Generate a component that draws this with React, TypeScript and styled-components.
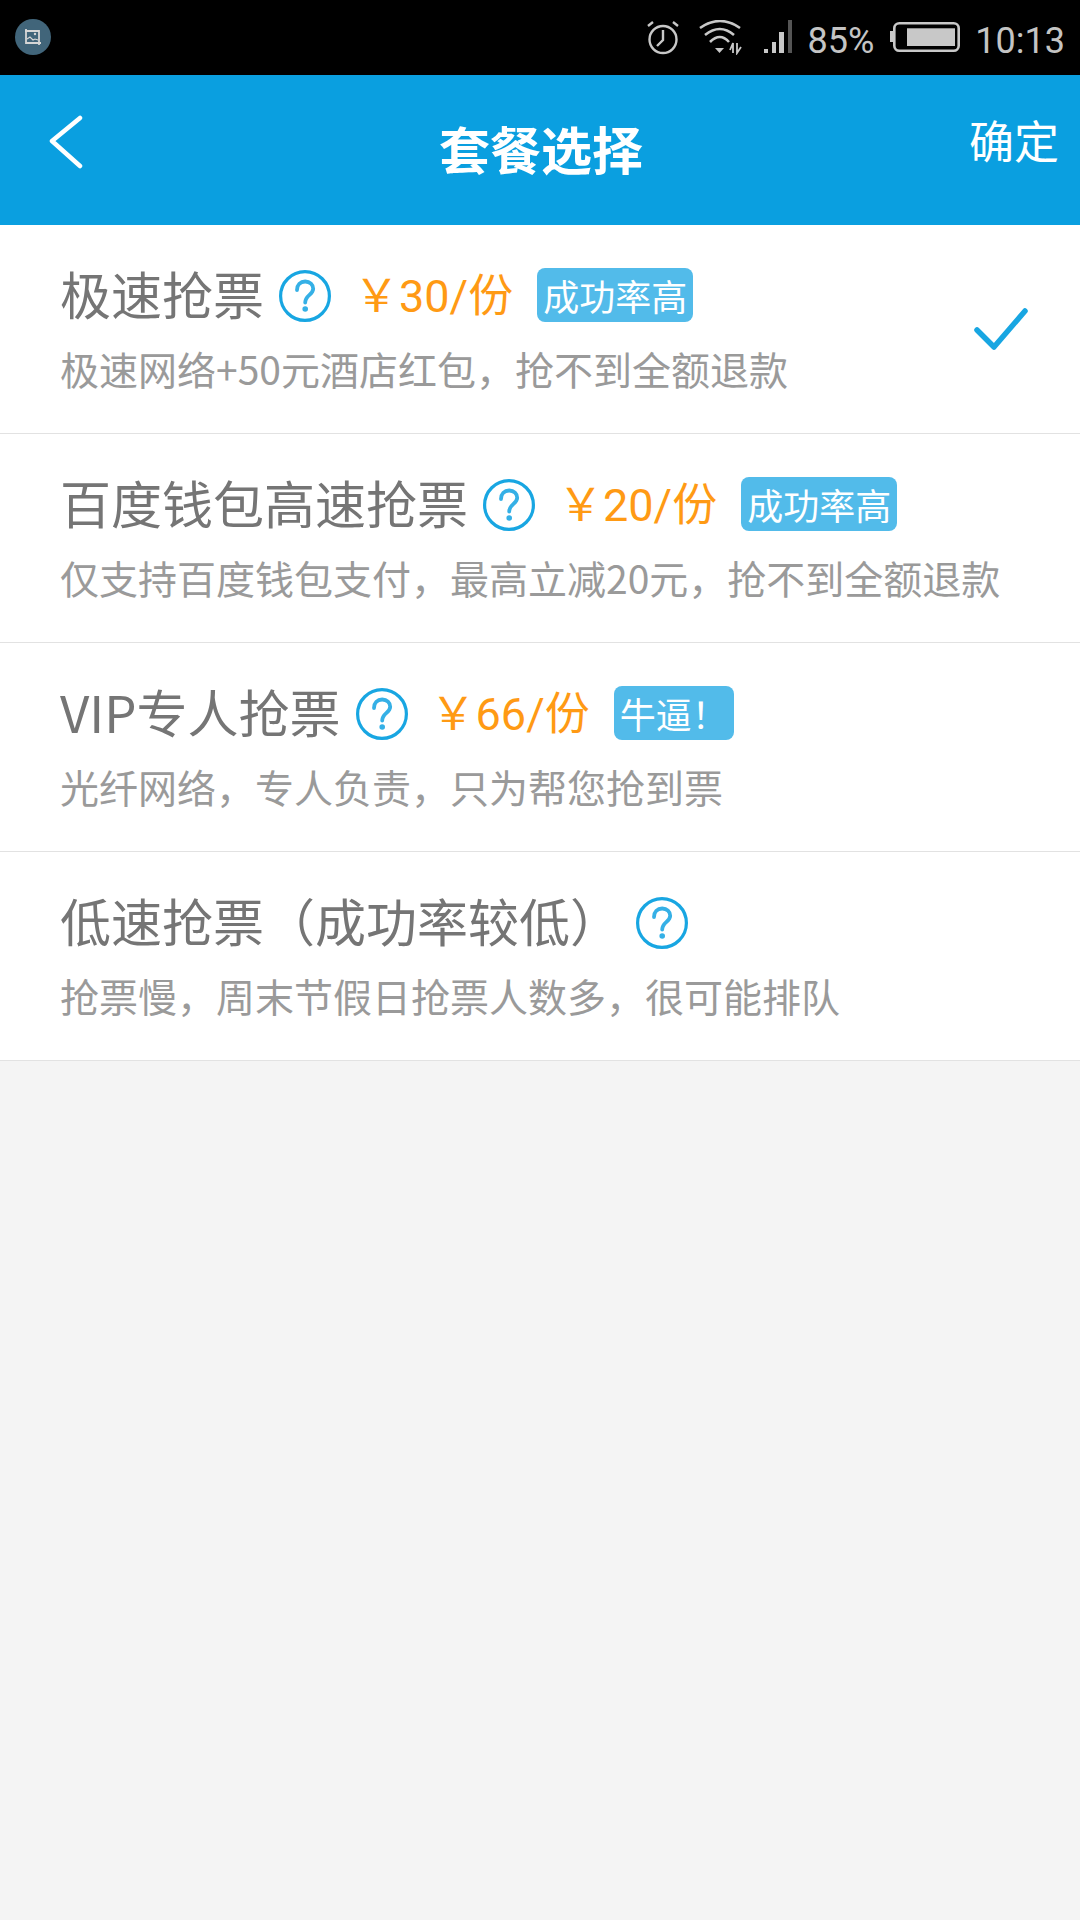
import React from "react";
import styled, { createGlobalStyle } from "styled-components";

const Global = createGlobalStyle`
  html, body { margin: 0; padding: 0; background: #f4f4f4; }
  body { font-family: "Noto Sans CJK SC", "Roboto", sans-serif; }
`;

const Page = styled.div`
  width: 1080px;
  height: 1920px;
  background: #f4f4f4;
  overflow: hidden;
`;

const StatusBar = styled.div`
  height: 75px;
  background: #000;
  display: flex;
  align-items: center;
  padding: 0 15px;
  box-sizing: border-box;
`;

const Notif = styled.div`
  width: 36px;
  height: 36px;
  border-radius: 50%;
  background: #41657a;
  display: flex;
  align-items: center;
  justify-content: center;
  margin-top: -1px;
`;

const StatusRight = styled.div`
  margin-left: auto;
  display: flex;
  align-items: flex-start;
  color: #c4c4c4;
  font-family: Roboto, sans-serif;
  font-size: 36px;
  height: 75px;
`;

const StatusText = styled.span<{ $ml: number }>`
  margin-left: ${(p) => p.$ml}px;
  line-height: 1;
  margin-top: 23px;
`;

const StatusIcon = styled.svg<{ $ml: number }>`
  margin-left: ${(p) => p.$ml}px;
  margin-top: 20px;
  display: block;
  flex: none;
`;

const Header = styled.div`
  height: 150px;
  background: #0a9fe0;
  display: flex;
  align-items: flex-start;
  color: #fff;
`;

const BackWrap = styled.div`
  width: 100px;
  padding: 40px 0 0 48px;
  box-sizing: border-box;
  flex: none;
`;

const Title = styled.div`
  position: absolute;
  left: 0;
  width: 1082px;
  text-align: center;
  font-size: 51px;
  font-weight: 700;
  line-height: 60px;
  margin-top: 43px;
`;

const Confirm = styled.div`
  font-size: 45px;
  line-height: 54px;
  margin: 38px 21px 0 auto;
`;

const List = styled.div`
  background: #fff;
`;

const Row = styled.div`
  height: 209px;
  box-sizing: border-box;
  border-bottom: 1px solid #e2e2e2;
  padding: 36px 0 0 60px;
  display: flex;
  position: relative;
`;

const RowBody = styled.div`
  display: flex;
  flex-direction: column;
`;

const TitleLine = styled.div`
  display: flex;
  align-items: flex-start;
  height: 64px;
`;

const Name = styled.span`
  font-size: 51px;
  line-height: 64px;
  color: #757575;
  white-space: nowrap;
`;

const Help = styled.svg`
  margin: 9px 0 0 15px;
  flex: none;
  display: block;
`;

const Price = styled.span`
  margin: 4px 0 0 23px;
  font-size: 45px;
  line-height: 64px;
  color: #ff9a14;
  white-space: nowrap;
  font-family: Roboto, "Noto Sans CJK SC", sans-serif;
`;

const Badge = styled.span<{ $w: number }>`
  margin: 7px 0 0 24px;
  width: ${(p) => p.$w}px;
  height: 54px;
  box-sizing: border-box;
  padding-left: 6px;
  border-radius: 8px;
  background: #52bbea;
  color: #fff;
  font-size: 36px;
  line-height: 54px;
  white-space: nowrap;
`;

const Sub = styled.div`
  margin-top: 15px;
  font-size: 39px;
  line-height: 56px;
  color: #9a9a9a;
  white-space: nowrap;
`;

const Check = styled.svg`
  position: absolute;
  left: 973px;
  top: 82px;
`;

const HelpIcon = () => (
  <Help width="52" height="52" viewBox="0 0 52 52">
    <circle cx="26" cy="26" r="24.4" fill="#fff" stroke="#18a6e2" strokeWidth="3.2" />
    <path d="M18 20c0-5 3.400-8.500 8.200-8.500s8 3.200 8 7.200c0 6-8 6.500-8 13.800" fill="none" stroke="#35b0e6" strokeWidth="3.8" strokeLinecap="round" />
    <circle cx="26.200" cy="39" r="2.800" fill="#35b0e6" />
  </Help>
);

const rows = [
  { name: "极速抢票", price: "￥30/份", badge: "成功率高", w: 156, sub: "极速网络+50元酒店红包，抢不到全额退款", checked: true },
  { name: "百度钱包高速抢票", price: "￥20/份", badge: "成功率高", w: 156, sub: "仅支持百度钱包支付，最高立减20元，抢不到全额退款" },
  { name: "VIP专人抢票", price: "￥66/份", badge: "牛逼！", w: 120, sub: "光纤网络，专人负责，只为帮您抢到票" },
  { name: "低速抢票（成功率较低）", sub: "抢票慢，周末节假日抢票人数多，很可能排队" },
];

export default function App() {
  return (
    <Page>
      <Global />
      <StatusBar>
        <Notif>
          <svg width="18" height="18" viewBox="0 0 18 18" fill="none" stroke="#d6d6d6" strokeWidth="1.8">
            <path d="M2 1v14h15M1 3h14v14" />
            <path d="M3 11l3-2 3 3 2-1 3 1" strokeWidth="1.1" />
            <circle cx="11" cy="6" r="1.200" fill="#d6d6d6" stroke="none" />
          </svg>
        </Notif>
        <StatusRight>
          <StatusIcon $ml={0} width="34" height="35" viewBox="0 0 34 35" fill="none" stroke="#c8c8c8" strokeWidth="2.4">
            <circle cx="17" cy="19.500" r="13.500" />
            <path d="M17 10v10l-6 6M2 6l5-4M32 6l-5-4" />
          </StatusIcon>
          <StatusIcon $ml={19} width="44" height="35" viewBox="0 0 44 35" fill="none" stroke="#c8c8c8" strokeWidth="2.6">
            <path d="M1 8Q21 -6 41 8M6 15Q21 3 35 15M11 22Q21 12 30 22" />
            <path d="M16 28h9l-4.500 5z" fill="#c8c8c8" stroke="none" />
            <path d="M34 33v-10l-3 7M38 23v10l4-6" strokeWidth="1.8" />
          </StatusIcon>
          <StatusIcon $ml={21} width="28" height="35" viewBox="0 0 28 35">
            <rect x="0" y="29" width="4" height="4" fill="#c8c8c8" />
            <rect x="8" y="22" width="4" height="11" fill="#c8c8c8" />
            <rect x="15" y="12" width="5" height="21" fill="#c8c8c8" />
            <rect x="24" y="0" width="4" height="33" fill="#555" />
          </StatusIcon>
          <StatusText $ml={16}>85%</StatusText>
          <StatusIcon $ml={16} width="70" height="35" viewBox="0 0 70 35">
            <rect x="0" y="11" width="4" height="11" fill="#c8c8c8" />
            <rect x="4.300" y="3.300" width="64.400" height="27.400" rx="5" fill="none" stroke="#c8c8c8" strokeWidth="2.6" />
            <rect x="17" y="8.300" width="48" height="17.700" fill="#c8c8c8" />
          </StatusIcon>
          <StatusText $ml={15}>10:13</StatusText>
        </StatusRight>
      </StatusBar>
      <Header>
        <BackWrap>
          <svg width="36" height="56" viewBox="0 0 36 56" fill="none" stroke="#fff" strokeWidth="4.500" strokeLinecap="round" strokeLinejoin="round">
            <path d="M32 3L4 26l28 25" />
          </svg>
        </BackWrap>
        <Title>套餐选择</Title>
        <Confirm>确定</Confirm>
      </Header>
      <List>
        {rows.map((r) => (
          <Row key={r.name}>
            <RowBody>
              <TitleLine>
                <Name>{r.name}</Name>
                <HelpIcon />
                {r.price && <Price>{r.price}</Price>}
                {r.badge && <Badge $w={r.w!}>{r.badge}</Badge>}
              </TitleLine>
              <Sub>{r.sub}</Sub>
            </RowBody>
            {r.checked && (
              <Check width="56" height="46" viewBox="0 0 56 46" fill="none" stroke="#18a6e2" strokeWidth="5.500" strokeLinecap="round" strokeLinejoin="round">
                <path d="M4 23l17 17L52 4" />
              </Check>
            )}
          </Row>
        ))}
      </List>
    </Page>
  );
}
